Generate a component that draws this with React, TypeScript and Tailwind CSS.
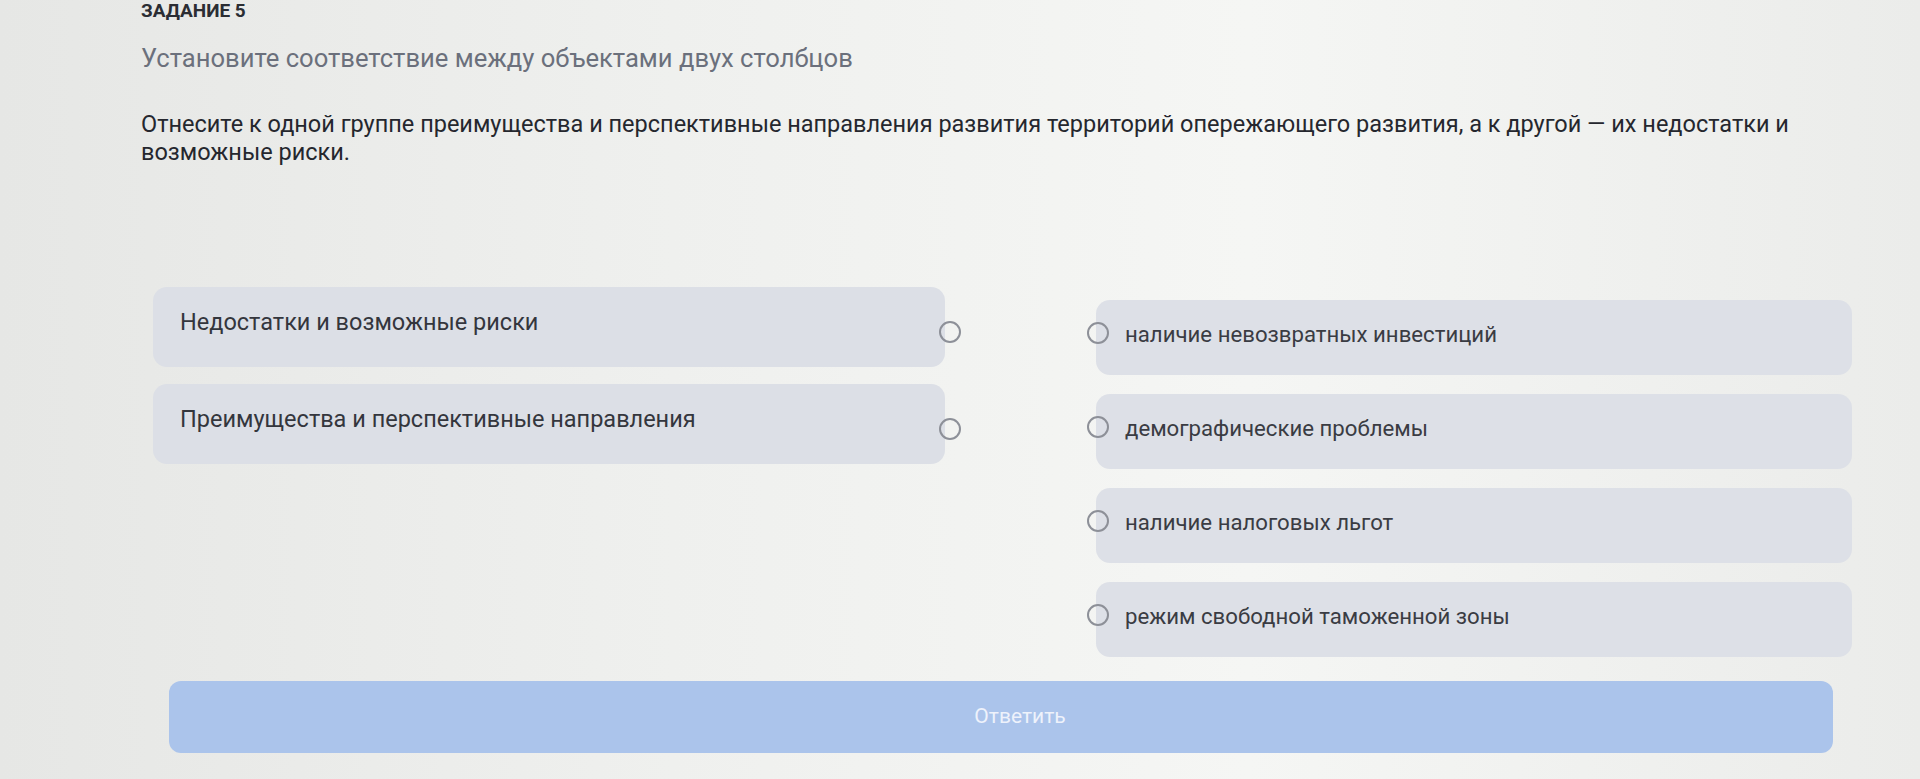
import React from "react";

const leftItems = ["Недостатки и возможные риски", "Преимущества и перспективные направления"];
const rightItems = [
  "наличие невозвратных инвестиций",
  "демографические проблемы",
  "наличие налоговых льгот",
  "режим свободной таможенной зоны",
];

function Ring() {
  return <span className="block h-[22px] w-[22px] rounded-full border-2 border-[#8d9098] bg-transparent" />;
}

export default function App() {
  return (
    <div className="h-[779px] w-[1920px] overflow-hidden bg-[linear-gradient(90deg,#e6e7e5_0%,#eff0ee_35%,#f5f6f4_65%,#ebecea_100%)] font-['Roboto','Liberation_Sans',sans-serif] text-[#32343b]">
      <div className="pl-[141px]">
        <div className="mt-[2px] text-[19px] font-bold uppercase leading-[18px] text-[#2b2d33]">Задание 5</div>
        <div className="mt-[23px] text-[25.6px] leading-[30px] text-[#6b707c]">
          Установите соответствие между объектами двух столбцов
        </div>
        <p className="mt-[37px] text-[23.5px] font-normal leading-[28px] text-[#25272e]">
          Отнесите к одной группе преимущества и перспективные направления развития территорий опережающего развития, а к другой — их недостатки и
          <br />
          возможные риски.
        </p>
      </div>

      <div className="flex pl-[153px]">
        <div className="mt-[121px] flex w-[792px] flex-col gap-[17px]">
          {leftItems.map((t) => (
            <div key={t} className="relative flex h-[80px] items-center rounded-[14px] bg-[#dcdfe6] pl-[27px] text-[23.5px] text-[#34363d]">
              <span className="-mt-[8px]">{t}</span>
              <span className="absolute right-[-16px] top-[34px]">
                <Ring />
              </span>
            </div>
          ))}
        </div>
        <div className="ml-[151px] mt-[134px] flex w-[756px] flex-col gap-[19px]">
          {rightItems.map((t) => (
            <div key={t} className="relative flex h-[75px] items-center rounded-[14px] bg-[#dde0e7] pl-[29px] text-[22.2px] text-[#3a3c43]">
              <span className="-mt-[5px]">{t}</span>
              <span className="absolute left-[-9px] top-[22px]">
                <Ring />
              </span>
            </div>
          ))}
        </div>
      </div>

      <div className="ml-[169px] mt-[24px] flex h-[72px] w-[1664px] items-center justify-center rounded-[12px] bg-[#abc4eb] pl-[38px] text-[21px] text-[#eef2fb]">
        Ответить
      </div>
    </div>
  );
}
